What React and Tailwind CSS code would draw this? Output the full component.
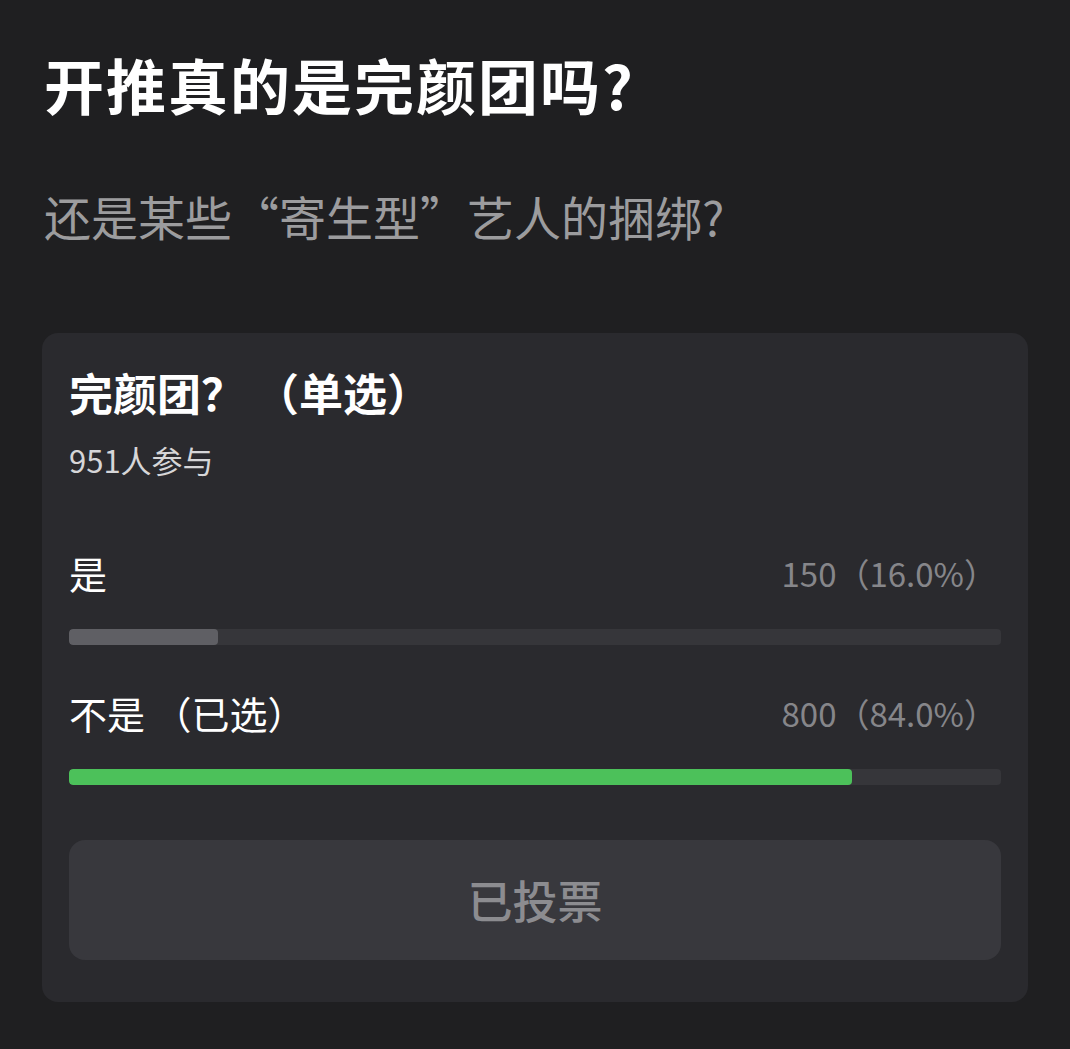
export default function App() {
  const font = { fontFamily: '"Noto Sans CJK SC", "Noto Sans", sans-serif' };
  return (
    <div className="min-h-[1049px] w-[1070px] bg-[#1f1f21] px-[42px] pt-[44px] pb-[46px]" style={font}>
      <h1 className="pl-[2px] text-[60px] leading-[80px] font-bold tracking-[2px] text-white">
        开推真的是完颜团吗?
      </h1>
      <p className="mt-[62px] pl-[2px] text-[47px] leading-[60px] text-[#9c9c9e]">
        还是某些“寄生型”艺人的捆绑?
      </p>

      <div className="mt-[87px] w-[986px] rounded-[16px] bg-[#2a2a2e] px-[27px] pt-[31px] pb-[42px]">
        <div className="text-[44px] leading-[56px] font-bold text-white">
          完颜团？ （单选）
        </div>
        <div className="mt-[20px] text-[31px] leading-[40px] text-[#d6d6d8]">951人参与</div>

        <PollOption label="是" count="150（16.0%）" pct={16} fill="bg-[#5f5f64]" className="mt-[69px]" />
        <PollOption label="不是 （已选）" count="800（84.0%）" pct={84} fill="bg-[#4cc15a]" className="mt-[44px]" />

        <button className="mt-[55px] flex h-[120px] w-full items-center justify-center rounded-[16px] bg-[#38383d] text-[45px] font-medium text-[#8c8c90]">
          已投票
        </button>
      </div>
    </div>
  );
}

function PollOption({ label, count, pct, fill, className }) {
  return (
    <div className={className}>
      <div className="flex items-center justify-between pr-[4px]">
        <span className="text-[38px] leading-[48px] text-white">{label}</span>
        <span className="text-[33px] leading-[48px] text-[#86868a]">{count}</span>
      </div>
      <div className="mt-[32px] h-[16px] w-full overflow-hidden rounded-[4px] bg-[#36363a]">
        <div className={`h-full rounded-[4px] ${fill}`} style={{ width: `${pct}%` }} />
      </div>
    </div>
  );
}
